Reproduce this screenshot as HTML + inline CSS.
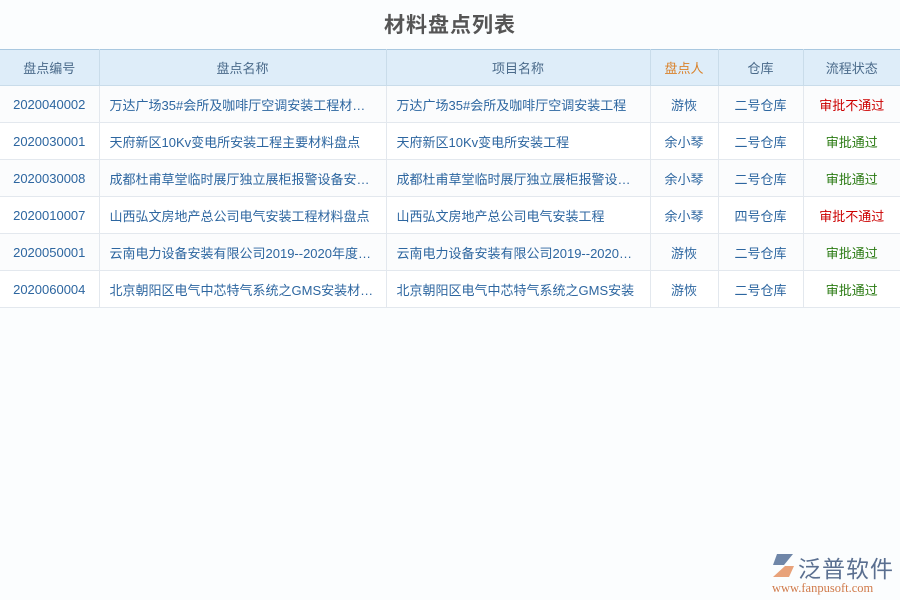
<!DOCTYPE html>
<html><head><meta charset="utf-8"><style>
body{margin:0;width:900px;height:600px;background:#fbfdfe;font-family:"Liberation Sans","Noto Sans CJK SC",sans-serif;position:relative;overflow:hidden}
h1{margin:0;position:absolute;top:9px;left:0;width:900px;text-align:center;font-size:21px;color:#555;font-weight:bold;letter-spacing:1px}
table{position:absolute;top:49px;left:0;width:900px;border-collapse:collapse;table-layout:fixed;font-size:13px}
th{height:35px;padding:0;background:#deedf9;color:#4a6a8a;font-weight:normal;border:1px solid #c9dcea;border-top:1px solid #a9c8e0}
td{height:36px;border:1px solid #e3e8ee;color:#2d66a0;padding:0 10px;white-space:nowrap;overflow:hidden;text-overflow:ellipsis;background:#fff}
td.c{text-align:center;padding:0}
tr:nth-child(even) td{background:#fbfcfd}
.r{color:#c00 !important}.g{color:#2a7a12 !important}
th:first-child,td:first-child{border-left:none}th:last-child,td:last-child{border-right:none}
.logo{position:absolute;left:770px;top:551px;width:128px;height:46px}
</style></head><body>
<h1>材料盘点列表</h1>
<table>
<colgroup><col style="width:99px"><col style="width:287px"><col style="width:264px"><col style="width:68px"><col style="width:85px"><col style="width:97px"></colgroup>
<tr><th>盘点编号</th><th>盘点名称</th><th>项目名称</th><th style="color:#d9822b">盘点人</th><th>仓库</th><th>流程状态</th></tr>
<tr><td class="c">2020040002</td><td>万达广场35#会所及咖啡厅空调安装工程材料盘点</td><td>万达广场35#会所及咖啡厅空调安装工程</td><td class="c">游恢</td><td class="c">二号仓库</td><td class="c r">审批不通过</td></tr>
<tr><td class="c">2020030001</td><td>天府新区10Kv变电所安装工程主要材料盘点</td><td>天府新区10Kv变电所安装工程</td><td class="c">余小琴</td><td class="c">二号仓库</td><td class="c g">审批通过</td></tr>
<tr><td class="c">2020030008</td><td>成都杜甫草堂临时展厅独立展柜报警设备安装盘点</td><td>成都杜甫草堂临时展厅独立展柜报警设备安装</td><td class="c">余小琴</td><td class="c">二号仓库</td><td class="c g">审批通过</td></tr>
<tr><td class="c">2020010007</td><td>山西弘文房地产总公司电气安装工程材料盘点</td><td>山西弘文房地产总公司电气安装工程</td><td class="c">余小琴</td><td class="c">四号仓库</td><td class="c r">审批不通过</td></tr>
<tr><td class="c">2020050001</td><td>云南电力设备安装有限公司2019--2020年度盘点</td><td>云南电力设备安装有限公司2019--2020年度安装</td><td class="c">游恢</td><td class="c">二号仓库</td><td class="c g">审批通过</td></tr>
<tr><td class="c">2020060004</td><td>北京朝阳区电气中芯特气系统之GMS安装材料盘点</td><td>北京朝阳区电气中芯特气系统之GMS安装</td><td class="c">游恢</td><td class="c">二号仓库</td><td class="c g">审批通过</td></tr>
</table>
<div class="logo">
<svg width="28" height="26" style="position:absolute;left:0;top:2px" viewBox="0 0 28 26"><path d="M7 1h16l-9 11H3z" fill="#6f86a8"/><path d="M15 13h9l-5 11H3z" fill="#e8a27a"/></svg>
<div style="position:absolute;left:28px;top:-1px;font-size:23px;color:#5a6f90;letter-spacing:1px">泛普软件</div>
<div style="position:absolute;left:2px;top:30px;font-family:'Liberation Serif',serif;font-size:12.5px;color:#d07a4a">www.fanpusoft.com</div>
</div>
</body></html>
